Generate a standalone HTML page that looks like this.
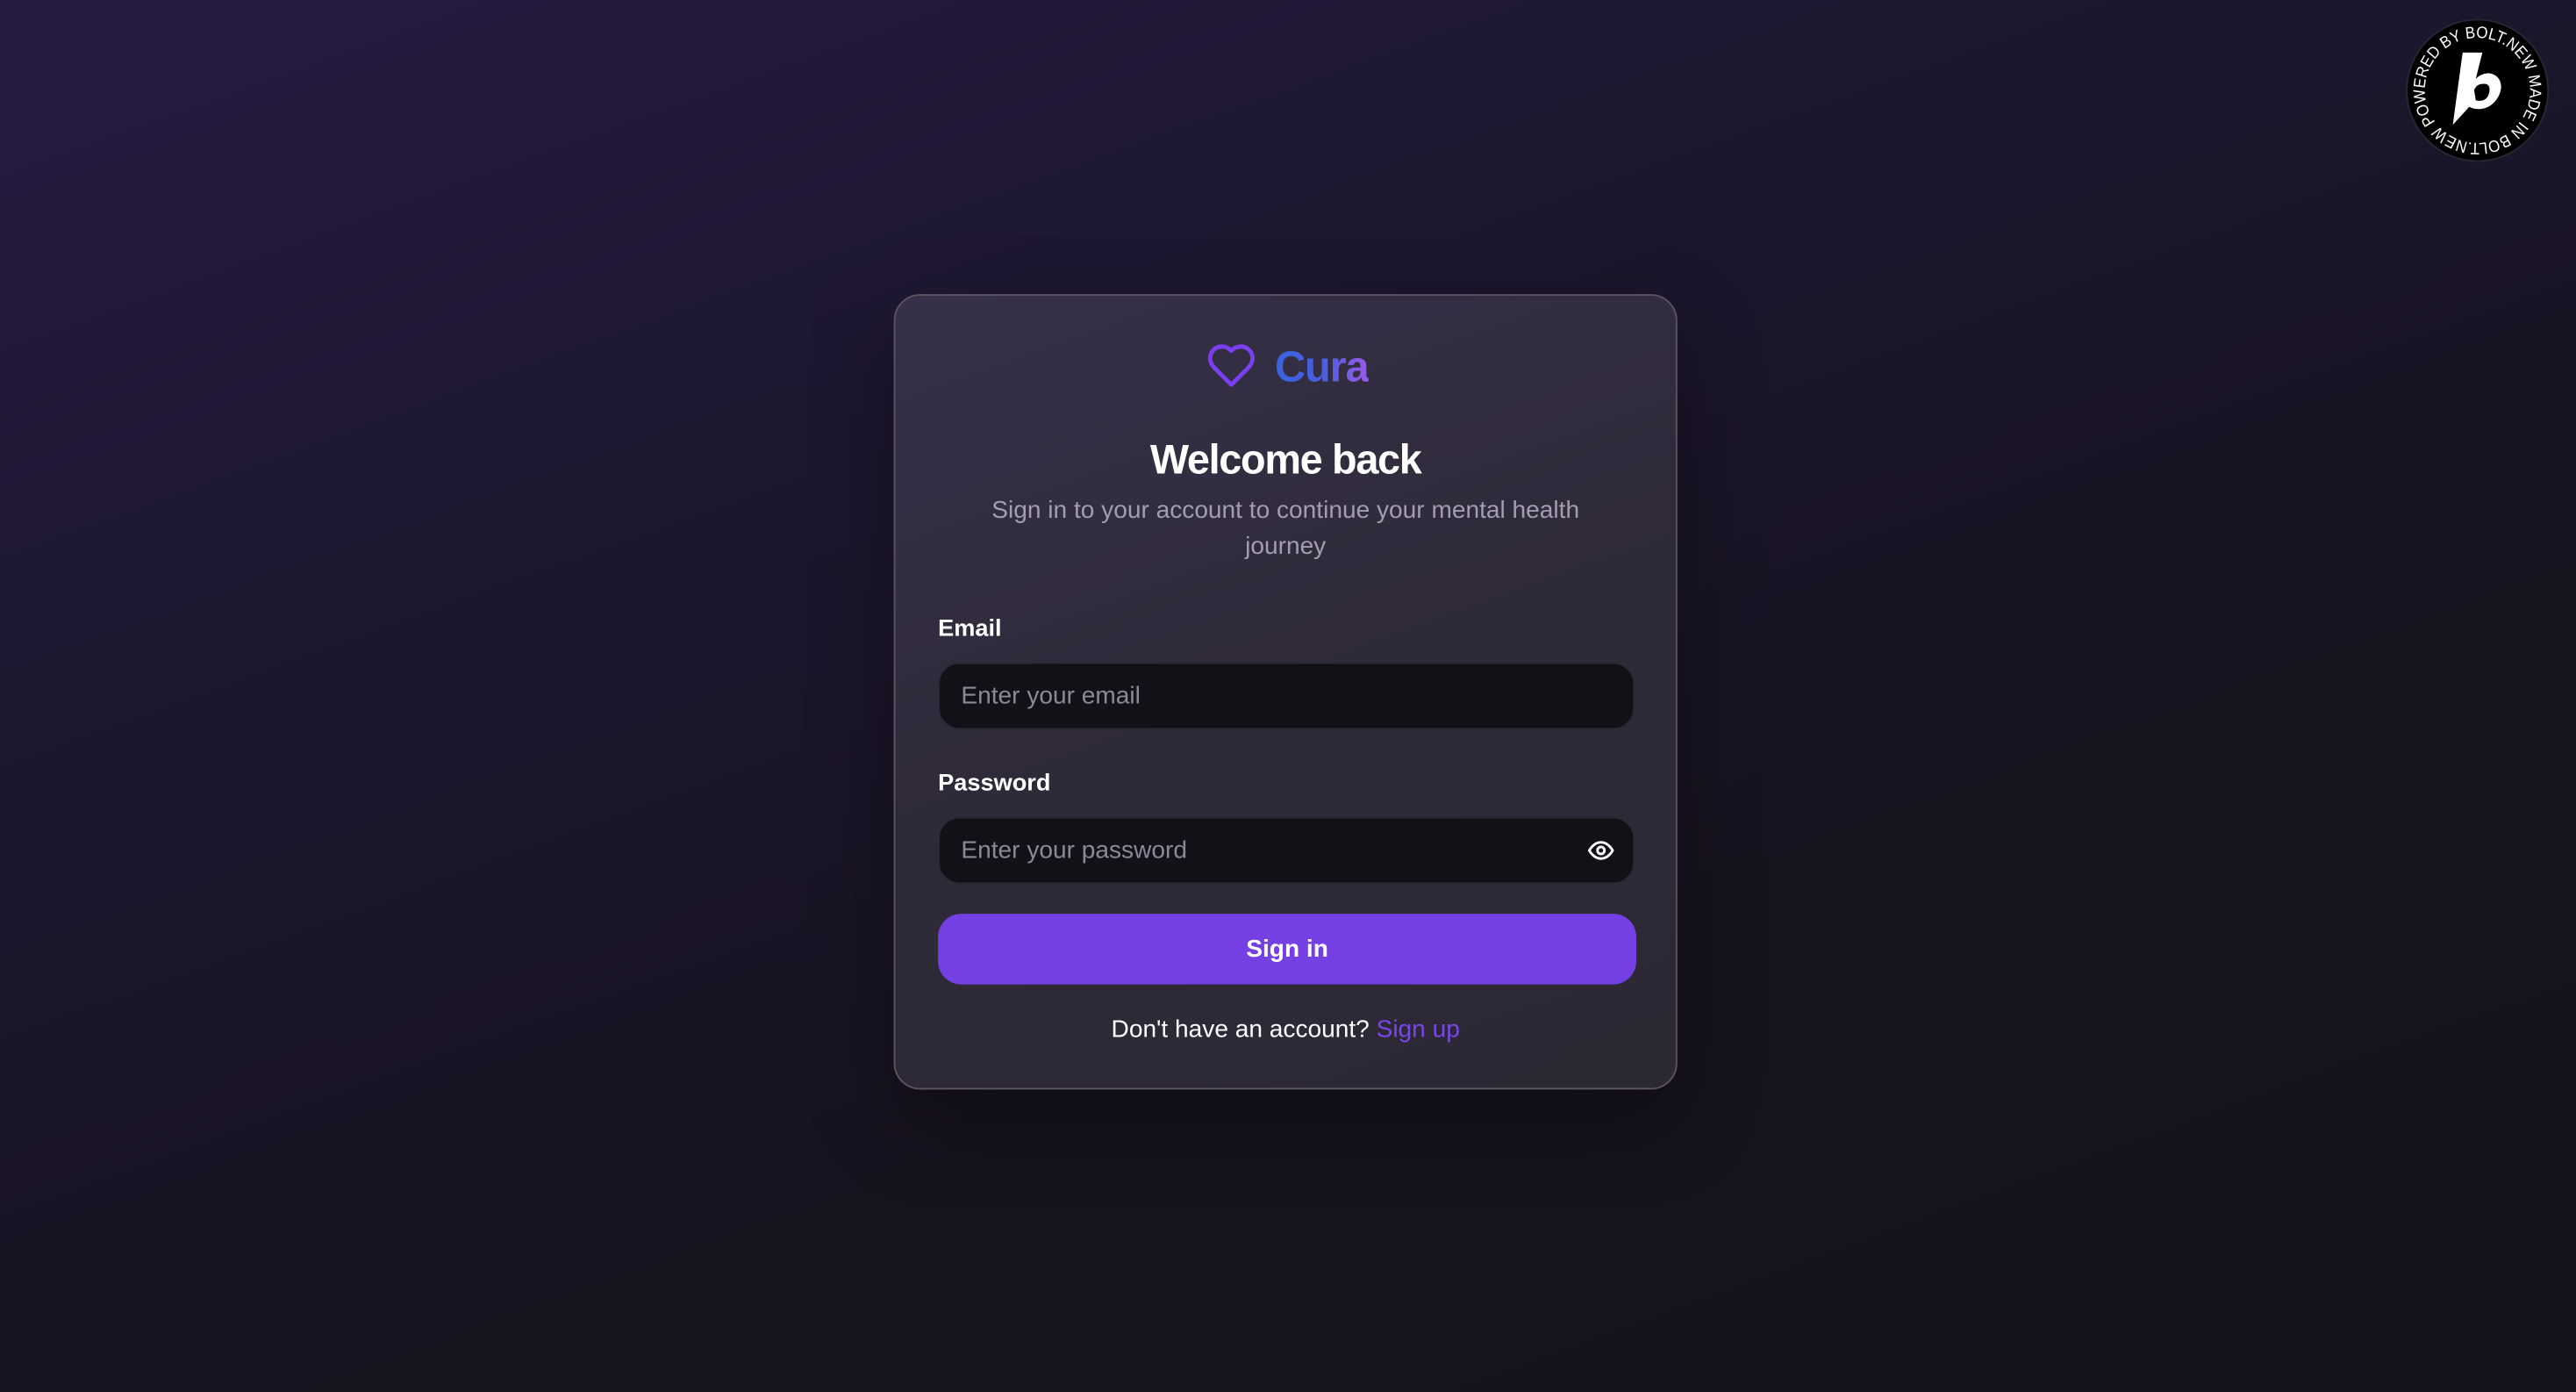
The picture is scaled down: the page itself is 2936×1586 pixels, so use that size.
<!DOCTYPE html>
<html><head><meta charset="utf-8"><style>
html,body{margin:0;padding:0;width:2936px;height:1586px;overflow:hidden;background:#17131f;}
#w{position:absolute;left:0;top:0;width:1568px;height:847px;transform:scale(1.87245);transform-origin:0 0;
background:linear-gradient(160deg,#281b42 0%,#1d1730 30%,#17131f 65%,#17131e 100%);font-family:"Liberation Sans",sans-serif;}
.card{position:absolute;left:544px;top:179px;width:477px;height:484px;box-sizing:border-box;border:1px solid #5a5463;border-radius:16px;
background:linear-gradient(160deg,#36304a 0%,#2f2a38 50%,#2c2834 100%);box-shadow:0 20px 50px rgba(0,0,0,.35);}
.abs{position:absolute;}
.t{position:absolute;left:0;width:100%;text-align:center;}
.lbl{position:absolute;left:26px;color:#fff;font-size:14.5px;font-weight:bold;}
.inp{position:absolute;left:26px;width:424px;height:41px;box-sizing:border-box;background:#131118;border:1px solid #2a2832;border-radius:13px;color:#8d8899;font-size:15px;line-height:40px;padding-left:13px;}
</style></head><body><div id="w">
<div class="card">
  <svg class="abs" style="left:188px;top:27px" width="33" height="31" viewBox="0 0 24 24" fill="none" stroke="#7a3ff0" stroke-width="2" stroke-linejoin="round"><path d="M19 14c1.5-1.5 3-3.2 3-5.5A5.5 5.5 0 0 0 16.5 3c-1.8 0-3 .5-4.5 2-1.5-1.5-2.7-2-4.5-2A5.5 5.5 0 0 0 2 8.5c0 2.3 1.5 4 3 5.5l7 7Z"/></svg>
  <div class="abs" style="left:231px;top:28px;font-size:26px;font-weight:bold;letter-spacing:-0.6px;background:linear-gradient(90deg,#3a62dc,#4a5ee0 50%,#9a5ce8);-webkit-background-clip:text;background-clip:text;color:transparent;">Cura</div>
  <div class="t" style="top:86px;color:#fff;font-size:25px;font-weight:bold;letter-spacing:-0.7px;">Welcome back</div>
  <div class="t" style="top:120px;color:#a29daf;font-size:15px;line-height:22px;padding:0 46px;box-sizing:border-box;">Sign in to your account to continue your mental health journey</div>
  <div class="lbl" style="top:195px">Email</div>
  <div class="inp" style="top:223px">Enter your email</div>
  <div class="lbl" style="top:289px">Password</div>
  <div class="inp" style="top:317px">Enter your password
    <svg class="abs" style="right:11px;top:11px" width="17" height="17" viewBox="0 0 24 24" fill="none" stroke="#fff" stroke-width="2.2"><path d="M2 12s3.5-7 10-7 10 7 10 7-3.5 7-10 7S2 12 2 12Z"/><circle cx="12" cy="12" r="3"/></svg>
  </div>
  <div class="abs" style="left:26px;top:376px;width:425px;height:43px;background:#7440e3;border-radius:14px;color:#fff;font-size:15px;font-weight:bold;text-align:center;line-height:43px;">Sign in</div>
  <div class="t" style="top:438px;color:#fff;font-size:15px;">Don't have an account? <span style="color:#7a45ea">Sign up</span></div>
</div>
<svg class="abs" style="left:1464px;top:11px" width="88" height="88" viewBox="0 0 88 88">
  <circle cx="44" cy="44" r="43" fill="#000" stroke="#2a2535" stroke-width="1"/>
  <defs><path id="c" d="M44,44 m-32,0 a32,32 0 1,1 64,0 a32,32 0 1,1 -64,0"/></defs>
  <g transform="rotate(-37 44 44)">
  <text font-family="Liberation Sans,sans-serif" font-size="10" fill="#fff"><textPath href="#c" startOffset="0" textLength="198" lengthAdjust="spacingAndGlyphs">POWERED BY BOLT.NEW MADE IN BOLT.NEW</textPath></text>
  </g>
  <path d="M35 21h12l-4 16c3-3 7-4 10-3 6 2 7 9 3 15-4 6-11 8-17 5l-10 11Z M43 50c3 1 7 0 8-4s0-6-3-6-5 1-6 4Z" fill="#fff" fill-rule="evenodd"/>
</svg>
</div></body></html>
